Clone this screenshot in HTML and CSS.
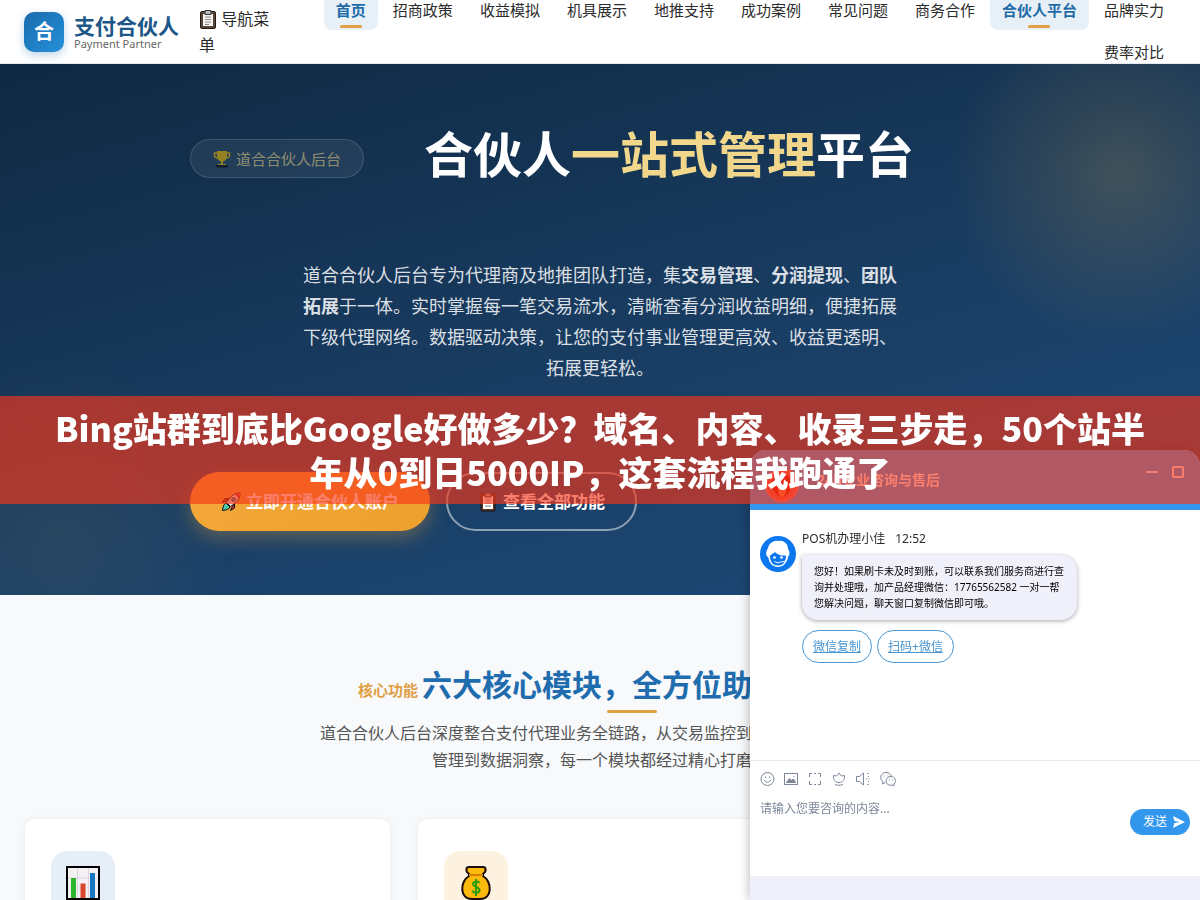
FILE: index.html
```html
<!DOCTYPE html>
<html lang="zh-CN">
<head>
  <meta charset="utf-8">
  <meta name="viewport" content="width=device-width, initial-scale=1">
  <title>支付合伙人 - 合伙人平台</title>
  <link rel="stylesheet" href="styles.css">
</head>
<body>
<header class="header">
  <a class="logo" href="#">
    <span class="logo-icon">合</span>
    <span class="logo-text">
      <strong>支付合伙人</strong>
      <small>Payment Partner</small>
    </span>
  </a>
  <button class="nav-toggle" type="button">
    <svg class="emoji" viewBox="0 0 18 20"><rect x="1.500" y="2.500" width="15" height="17" rx="1.500" fill="#5a4636" stroke="#1d1a18"/><path d="M4 5h10v12H4z" fill="#f3f3f3"/><path d="M6 1.500h6v4H6z" fill="#bbb" stroke="#333"/><path d="M6 8h6M6 10.500h6M6 13h6M6 15.500h4" stroke="#8a8a8a"/></svg>
    导航菜单
  </button>
  <nav class="nav">
    <a class="active" href="#">首页</a>
    <a href="#">招商政策</a>
    <a href="#">收益模拟</a>
    <a href="#">机具展示</a>
    <a href="#">地推支持</a>
    <a href="#">成功案例</a>
    <a href="#">常见问题</a>
    <a href="#">商务合作</a>
    <a class="active" href="#">合伙人平台</a>
    <a href="#">品牌实力</a>
    <a href="#">费率对比</a>
  </nav>
</header>

<section class="hero">
  <div class="hero-inner">
    <div class="hero-top">
      <span class="badge">
        <svg viewBox="0 0 18 18"><path d="M4.500 3H1.500v2c0 2 1.500 3 3.500 3M13.500 3h3v2c0 2-1.500 3-3.500 3" fill="none" stroke="#ffc400" stroke-width="1.500"/><path d="M4 1h10v5c0 3-2 5-4 5.500V14h3v2H5v-2h3v-2.500C6 11 4 9 4 6z" fill="#ffc400"/><path d="M3 15h12v2.500H3z" fill="#111"/></svg>
        道合合伙人后台
      </span>
      <h1>合伙人<em>一站式管理</em>平台</h1>
    </div>
    <p class="hero-desc">道合合伙人后台专为代理商及地推团队打造，集<strong>交易管理</strong>、<strong>分润提现</strong>、<strong>团队拓展</strong>于一体。实时掌握每一笔交易流水，清晰查看分润收益明细，便捷拓展下级代理网络。数据驱动决策，让您的支付事业管理更高效、收益更透明、拓展更轻松。</p>
    <div class="hero-btns">
      <a class="btn btn-gold" href="#">
        <svg viewBox="0 0 20 20"><path d="M5 9L1.500 10.500 4 6.500h4zM11 15l-1.500 3.500 4-2.500v-4z" fill="#d8323c" stroke="#111"/><path d="M19 1c-6 0-9 3-13.500 9.500l4 4C16 10 19 7 19 1z" fill="#dfe3e8" stroke="#111"/><path d="M19 1c-2 0-4 .3-5.500 1.200l4.300 4.300C18.700 5 19 3 19 1z" fill="#e23b43"/><circle cx="12.500" cy="7.500" r="1.800" fill="#35a4dc" stroke="#111"/><path d="M5 11c-2.500 1-3 4-3.500 7.500C5 18 8 17.500 9 15z" fill="#4cc7b0" stroke="#111"/></svg>
        立即开通合伙人账户
      </a>
      <a class="btn btn-line" href="#">
        <svg viewBox="0 0 20 20"><rect x="3" y="2" width="14" height="17" rx="1" fill="#5b3328" stroke="#151515"/><path d="M5 4h10v13H5z" fill="#fff"/><path d="M7 1h6v4H7z" fill="#aaa" stroke="#222"/><path d="M7 8h6M7 11h6M7 14h6" stroke="#777"/></svg>
        查看全部功能
      </a>
    </div>
  </div>
</section>

<section class="features">
  <div class="section-head">
    <span class="section-tag">核心功能</span>
    <h2>六大核心模块，全方位助力展业</h2>
  </div>
  <p class="section-desc">道合合伙人后台深度整合支付代理业务全链路，从交易监控到分润结算，从团队管理到数据洞察，每一个模块都经过精心打磨。</p>
  <div class="cards">
    <div class="card">
      <div class="card-icon blue">
        <svg viewBox="0 0 34 34"><path d="M1 1h32v32H1z" fill="#f4f0f4" stroke="#000" stroke-width="2"/><path d="M11.500 2v30M22.500 2v30M2 12h30M2 22h30" stroke="#ddd8e0"/><path d="M5 12h5v20H5z" fill="#2fb52b"/><path d="M14.500 17.500h5V32h-5z" fill="#d8472b"/><path d="M24 7h5v25h-5z" fill="#1976c0"/></svg>
      </div>
    </div>
    <div class="card">
      <div class="card-icon gold">
        <svg viewBox="0 0 34 34"><path d="M10 8C6 5 7 1 10 1h14c3 0 4 4 0 7v2c9 5 10 23-3 23h-8C0 33 1 15 10 10z" fill="#fbb90b" stroke="#1b0b0b" stroke-width="2"/><path d="M10 9h14" stroke="#d58100" stroke-width="2"/><path d="M20.500 17c-1-2-6.500-2-6.500 1s6.500 2.500 6.500 6-6 3.500-7 .5M17 13v17" fill="none" stroke="#2a9c0c" stroke-width="2"/></svg>
      </div>
    </div>
    <div class="card">
      <div class="card-icon blue"></div>
    </div>
  </div>
</section>

<!-- 客服聊天窗口 -->
<aside class="chat">
  <div class="chat-head">
    <svg class="chat-logo" viewBox="0 0 34 34"><circle cx="17" cy="17" r="16" fill="#e85a50" stroke="#e8707a" stroke-width="2"/><path d="M17 30C8 25 4 17 8 10c3-4 7-2 9 3 2-5 6-7 9-3 4 7 0 15-9 20z" fill="#d00d00"/><path d="M17 30c-4-4-5-7-3-10 1-2 2-2 3 0 1-2 2-2 3 0 2 3 1 6-3 10z" fill="#ff7a40"/></svg>
    <span class="chat-title">24h专业咨询与售后</span>
    <button type="button" aria-label="最小化"><svg viewBox="0 0 14 14"><path d="M1 7h12"/></svg></button>
    <button type="button" aria-label="最大化"><svg viewBox="0 0 14 14"><rect x="2" y="2" width="10" height="10" rx="1"/></svg></button>
  </div>
  <div class="chat-body">
    <svg class="avatar" viewBox="0 0 36 36"><circle cx="18" cy="18" r="18" fill="#0b78f0"/><path d="M7 20C5 17 7 14 8 12c1-5 6-8 11-7 5-1 9 3 9 8 2 2 2 6 0 8-1 6-5 10-10 10S9 27 8.500 22z" fill="#fff"/><path d="M10 21c0-3 3-3 5-5 3 3 7 4 11 3.500C26 26 23 29.500 18 29.500S10.500 26 10 21z" fill="#0b78f0"/><circle cx="14.500" cy="21.500" r="1.300" fill="#fff"/><circle cx="21.500" cy="21.500" r="1.300" fill="#fff"/><path d="M14.500 25.500c2 1.500 4 1.500 6 .5 3 0 6-1 7-4" fill="none" stroke="#fff"/></svg>
    <div class="msg">
      <div class="msg-name"><span>POS机办理小佳</span><time>12:52</time></div>
      <p class="bubble">您好！如果刷卡未及时到账，可以联系我们服务商进行查询并处理哦，加产品经理微信：17765562582 一对一帮您解决问题，聊天窗口复制微信即可哦。</p>
      <div class="msg-links">
        <a href="#">微信复制</a>
        <a href="#">扫码+微信</a>
      </div>
    </div>
  </div>
  <form class="chat-input">
    <div class="tools">
      <button type="button" aria-label="表情"><svg viewBox="0 0 16 16"><circle cx="7.500" cy="8" r="6.500"/><path d="M4.500 9c.8 3 5.200 3 6 0M5.500 5.500v1.500M9.500 5.500v1.500"/></svg></button>
      <button type="button" aria-label="图片"><svg viewBox="0 0 16 16"><rect x=".5" y="2.500" width="13" height="11"/><path d="M2.500 11.500l3-4 2 2 2-1.500 2 3.500z" fill="#7c8799"/><path d="M9.500 5.500h1"/></svg></button>
      <button type="button" aria-label="截图"><svg viewBox="0 0 16 16"><path d="M4 2.500H1.500V6M10 2.500h2.500V6M1.500 10v3.500H4M12.500 10v3.500H10M6 2.500h2M6 13.500h2"/></svg></button>
      <button type="button" aria-label="评价"><svg viewBox="0 0 16 16"><path d="M1.500 4.500L4.500 5 7 2l2.500 3 3-.5c.5 4-1.500 7-5.500 7s-6-3-5.500-7zM3 13.500c2.500 1 5.500 1 8 0"/></svg></button>
      <button type="button" aria-label="声音"><svg viewBox="0 0 16 16"><path d="M.5 5.500h3l4-3.500v12l-4-3.500h-3zM10 8h1M12.500 8h1M11.500 2.500h1.500M11.500 13.500h1.500M12 5.500h1M12 10.500h1"/></svg></button>
      <button type="button" aria-label="微信"><svg viewBox="0 0 16 16"><path d="M5 11.500l-2.500 1.500.5-2.500C-1 8 .5 1.500 6 1.500c3 0 5 1.500 5.500 4"/><path d="M11 5.500c-3 0-5 2-5 4.500 0 3 3 5 6.500 4l1.500 1v-2c3-3 1-7.500-3-7.500z"/><path d="M3.500 5h1M7.500 5h1M9 9h1M12 9h1"/></svg></button>
    </div>
    <div class="editor">
      <textarea aria-label="咨询内容" placeholder="请输入您要咨询的内容..."></textarea>
      <button class="send" type="submit">发送 <svg viewBox="0 0 12 12"><path d="M0 0l12 6-12 6 1.500-5L7 6 1.500 5z" fill="#fff"/></svg></button>
    </div>
  </form>
  <div class="chat-foot"></div>
</aside>

<div class="banner">Bing站群到底比Google好做多少？域名、内容、收录三步走，50个站半年从0到日5000IP，这套流程我跑通了</div>
</body>
</html>
```
FILE: styles.css
```css
* {
  margin: 0;
  padding: 0;
  box-sizing: border-box;
}
body {
  height: 100vh;
  overflow: hidden;
  font-family: "Noto Sans", "Noto Sans CJK SC", sans-serif;
  font-size: 16px;
  line-height: 26px;
  color: #2b2b2b;
  background: #f7f9fb;
}
a {
  color: inherit;
  text-decoration: none;
}
button {
  border: 0;
  background: none;
  font: inherit;
  color: inherit;
  cursor: pointer;
}
svg {
  flex: none;
}

/* 顶部导航 */
.header {
  display: flex;
  align-items: center;
  height: 64px;
  padding: 0 24px;
  background: #fff;
  border-bottom: 1px solid #e3e9ef;
}
.logo {
  display: flex;
  align-items: center;
  gap: 10px;
  flex: none;
}
.logo-icon {
  width: 40px;
  height: 40px;
  border-radius: 10px;
  background: linear-gradient(135deg, #1b6cae, #2490d8);
  box-shadow: 0 3px 8px rgba(27, 108, 174, 0.3);
  color: #fff;
  font-size: 20px;
  font-weight: 700;
  line-height: 40px;
  text-align: center;
}
.logo-text strong {
  display: block;
  color: #1c5788;
  font-size: 21px;
  line-height: 24px;
}
.logo-text small {
  display: block;
  color: #666;
  font-size: 11px;
  line-height: 12px;
}
.nav-toggle {
  width: 78px;
  margin-left: 20px;
  text-align: left;
  flex: none;
}
.emoji {
  width: 18px;
  height: 20px;
  vertical-align: -4px;
}
.nav {
  flex: 1;
  display: flex;
  flex-wrap: wrap;
  justify-content: flex-end;
  gap: 4px 3px;
}
.nav a {
  position: relative;
  padding: 5px 12px 7px;
  border-radius: 8px;
  font-size: 15px;
}
.nav .active {
  background: #e8f0f7;
  color: #1f6ba8;
  font-weight: 700;
}
.nav .active::after {
  content: "";
  position: absolute;
  left: 50%;
  bottom: 2px;
  width: 22px;
  height: 3px;
  margin-left: -11px;
  border-radius: 2px;
  background: #e09f45;
}

/* 首屏 */
.hero {
  padding: 58px 24px 64px;
  background:
    radial-gradient(circle at 1120px 110px, rgba(224, 170, 70, 0.2), transparent 170px),
    radial-gradient(circle at 60px 470px, rgba(224, 170, 70, 0.08), transparent 170px),
    linear-gradient(165deg, #0f2942, #1a3f66 60%, #1c4a78);
  color: #fff;
}
.hero-inner {
  max-width: 820px;
  margin: 0 auto;
}
.hero-top {
  display: flex;
  align-items: center;
  gap: 60px;
}
.badge {
  display: flex;
  align-items: center;
  gap: 5px;
  height: 39px;
  margin-top: 9px;
  padding: 0 22px;
  border: 1px solid rgba(255, 255, 255, 0.25);
  border-radius: 20px;
  background: rgba(255, 255, 255, 0.12);
  color: #f0d98c;
  font-size: 15px;
  opacity: 0.55;
}
.badge svg {
  width: 18px;
  height: 18px;
}
h1 {
  font-size: 49px;
  line-height: 64px;
}
h1 em {
  color: #f0d78c;
  font-style: normal;
}
.hero-desc {
  max-width: 600px;
  margin: 74px auto 88px;
  color: rgba(255, 255, 255, 0.85);
  font-size: 18px;
  line-height: 31px;
  text-align: center;
}
.hero-btns {
  display: flex;
  gap: 16px;
}
.btn {
  display: flex;
  align-items: center;
  gap: 5px;
  height: 59px;
  padding: 0 31px;
  border-radius: 30px;
  font-size: 17px;
  font-weight: 700;
}
.btn svg {
  width: 20px;
  height: 20px;
}
.btn-gold {
  background: linear-gradient(135deg, #f3a83a, #eda02c);
  box-shadow: 0 6px 20px rgba(240, 165, 50, 0.35);
}
.btn-line {
  padding: 0 30px;
  border: 2px solid rgba(255, 255, 255, 0.5);
}

/* 核心功能 */
.features {
  padding: 68px 24px;
}
.section-head {
  display: flex;
  justify-content: center;
  align-items: baseline;
  gap: 4px;
}
.section-tag {
  color: #e09f45;
  font-size: 15px;
  font-weight: 700;
}
h2 {
  position: relative;
  padding-bottom: 6px;
  color: #1f6cae;
  font-size: 30px;
  line-height: 44px;
}
h2::after {
  content: "";
  position: absolute;
  left: 50%;
  bottom: 0;
  width: 50px;
  height: 3px;
  margin-left: -25px;
  border-radius: 2px;
  background: #e09f45;
}
.section-desc {
  max-width: 564px;
  margin: 7px auto 44px;
  color: #555;
  line-height: 27px;
  text-align: center;
}
.cards {
  display: grid;
  grid-template-columns: repeat(3, 1fr);
  gap: 26px;
}
.card {
  min-height: 260px;
  padding: 32px 26px;
  border: 1px solid #eff2f5;
  border-radius: 10px;
  background: #fff;
  box-shadow: 0 2px 8px rgba(0, 0, 0, 0.05);
}
.card-icon {
  display: flex;
  align-items: center;
  justify-content: center;
  width: 64px;
  height: 64px;
  border-radius: 16px;
}
.card-icon svg {
  width: 34px;
  height: 34px;
}
.blue {
  background: #e6eff7;
}
.gold {
  background: #fdf1e0;
}

/* 聊天窗口 */
.chat {
  position: fixed;
  right: 0;
  bottom: 0;
  width: 450px;
  border-radius: 16px 16px 0 0;
  background: #fff;
  box-shadow: 0 0 12px rgba(0, 0, 0, 0.3);
  font-size: 12px;
  line-height: 16px;
  overflow: hidden;
}
.chat-head {
  display: flex;
  align-items: center;
  gap: 12px;
  height: 60px;
  padding: 0 15px;
  background: #3296ec;
  color: #fff;
}
.chat-logo {
  width: 34px;
  height: 34px;
  margin-top: 10px;
}
.chat-title {
  flex: 1;
  padding-left: 6px;
  font-size: 14px;
  font-weight: 700;
}
.chat-head button {
  width: 14px;
  height: 14px;
  margin-bottom: 16px;
}
.chat-head button svg {
  display: block;
  fill: none;
  stroke: #fff;
  stroke-width: 2;
}
.chat-body {
  display: flex;
  gap: 6px;
  height: 250px;
  padding: 21px 10px 0;
}
.avatar {
  width: 36px;
  height: 36px;
  margin-top: 5px;
}
.msg-name {
  display: flex;
  gap: 10px;
}
.bubble {
  max-width: 275px;
  margin: 8px 0 10px;
  padding: 8px 12px 9px;
  border-radius: 2px 16px 16px 16px;
  background: #f0f0fa;
  box-shadow: 0 1px 4px rgba(0, 0, 0, 0.35);
  color: #000;
  font-size: 10px;
}
.msg-links {
  display: flex;
  gap: 5px;
}
.msg-links a {
  padding: 8px 10px;
  border: 1px solid #4795d1;
  border-radius: 17px;
  color: #4795d1;
  line-height: 15px;
  text-decoration: underline;
}
.chat-input {
  padding: 10px 10px 0;
  border-top: 1px solid #e8e8ee;
}
.tools {
  display: flex;
  gap: 8px;
}
.tools button {
  height: 16px;
}
.tools svg {
  display: block;
  width: 16px;
  height: 16px;
  fill: none;
  stroke: #7c8799;
}
.editor {
  display: flex;
  align-items: flex-start;
  height: 89px;
  padding-top: 14px;
}
.editor textarea {
  flex: 1;
  height: 60px;
  border: 0;
  outline: 0;
  resize: none;
  font: inherit;
}
.editor textarea::placeholder {
  color: #7c8799;
}
.send {
  display: flex;
  align-items: center;
  justify-content: flex-end;
  gap: 6px;
  width: 60px;
  height: 26px;
  margin-top: 8px;
  padding-right: 5px;
  border-radius: 13px;
  background: #3296ec;
  color: #fff;
}
.send svg {
  width: 12px;
  height: 12px;
}
.chat-foot {
  height: 24px;
  background: #f0f0fa;
}

/* 横幅标题 */
.banner {
  position: fixed;
  left: 0;
  right: 0;
  top: 50%;
  transform: translateY(-50%);
  z-index: 10;
  padding: 10px 50px;
  background: rgba(247, 53, 23, 0.64);
  color: #fff;
  font-family: "Noto Sans CJK SC", sans-serif;
  font-size: 34px;
  font-weight: 900;
  line-height: 44px;
  text-align: center;
}
```
